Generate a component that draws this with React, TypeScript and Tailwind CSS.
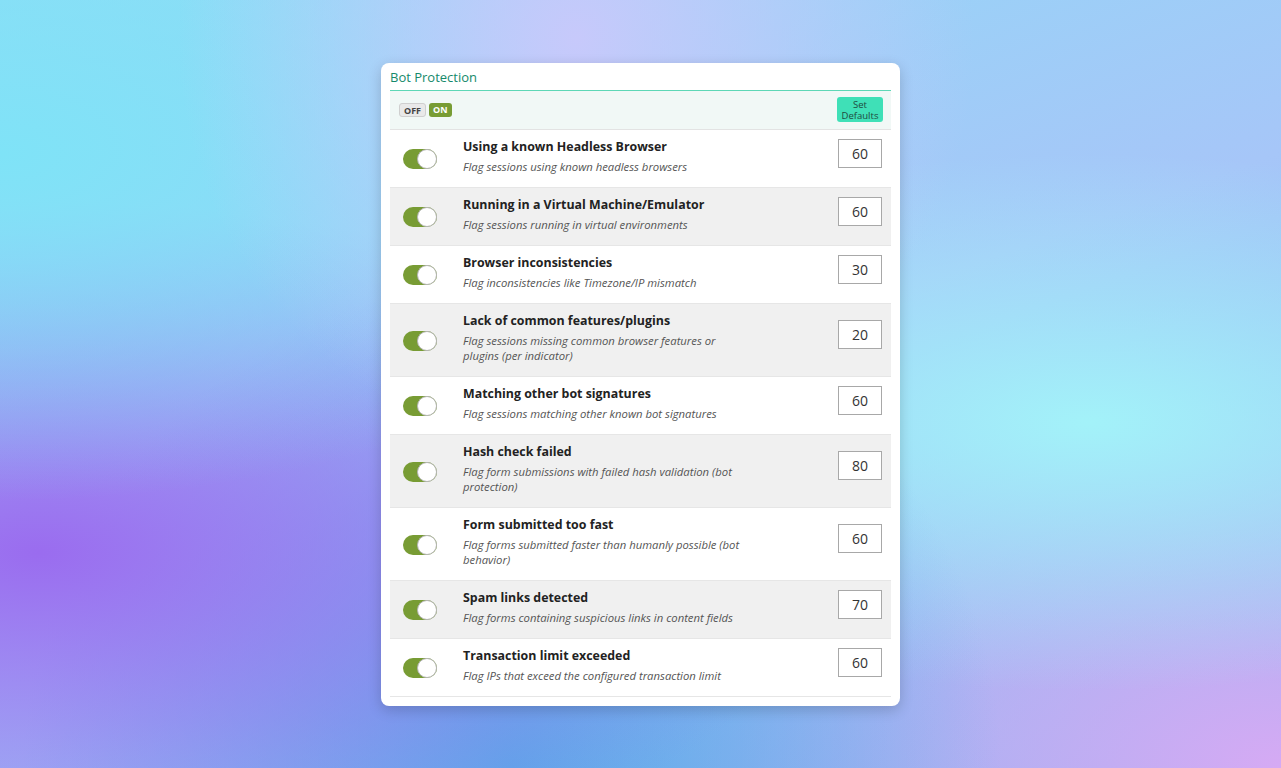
import { useState } from "react";

type Rule = {
  title: string;
  desc: string;
  score: number;
};

const rules: Rule[] = [
  { title: "Using a known Headless Browser", desc: "Flag sessions using known headless browsers", score: 60 },
  { title: "Running in a Virtual Machine/Emulator", desc: "Flag sessions running in virtual environments", score: 60 },
  { title: "Browser inconsistencies", desc: "Flag inconsistencies like Timezone/IP mismatch", score: 30 },
  { title: "Lack of common features/plugins", desc: "Flag sessions missing common browser features or plugins (per indicator)", score: 20 },
  { title: "Matching other bot signatures", desc: "Flag sessions matching other known bot signatures", score: 60 },
  { title: "Hash check failed", desc: "Flag form submissions with failed hash validation (bot protection)", score: 80 },
  { title: "Form submitted too fast", desc: "Flag forms submitted faster than humanly possible (bot behavior)", score: 60 },
  { title: "Spam links detected", desc: "Flag forms containing suspicious links in content fields", score: 70 },
  { title: "Transaction limit exceeded", desc: "Flag IPs that exceed the configured transaction limit", score: 60 },
];

function Toggle({ on }: { on: boolean }) {
  return (
    <div
      className={`w-[34px] h-[20px] rounded-full relative ${on ? "bg-[#789c34]" : "bg-[#cfcfcf]"}`}
    >
      <div
        className={`absolute top-0 w-[20px] h-[20px] rounded-full bg-white border border-[#b5b5b5] ${on ? "right-0" : "left-0"}`}
      ></div>
    </div>
  );
}

export default function App() {
  const [enabled] = useState(true);

  return (
    <div className="min-h-screen w-full flex items-center justify-center font-['Open_Sans',sans-serif] bg-[radial-gradient(ellipse_at_45%_5%,#c7c9fb_0%,transparent_40%),radial-gradient(ellipse_at_0%_20%,#7fe3f7_0%,transparent_40%),radial-gradient(ellipse_at_3%_72%,#9a6cef_0%,transparent_45%),radial-gradient(ellipse_at_40%_100%,#5ca9e9_0%,transparent_45%),radial-gradient(ellipse_at_85%_55%,#a3f2f9_0%,transparent_45%),radial-gradient(ellipse_at_100%_100%,#d6aaf4_0%,transparent_35%),linear-gradient(160deg,#8fdcf6,#a6c6f8_50%,#8ab3ef)]">
      <div className="w-[519px] bg-white rounded-[8px] shadow-[0_4px_14px_rgba(0,0,0,0.18)] px-[9px] pt-[4px] pb-[9px]">
        <div className="h-[21px] leading-[21px] text-[13px] text-[#15896b] mb-[2px]">Bot Protection</div>
        <div className="border-t border-[#5ed7b6]"></div>

        {/* Master switch + defaults */}
        <div className="h-[39px] bg-[#f1f8f6] border-b border-[#e3e3e3] flex items-center justify-between pl-[9px] pr-[8px]">
          <div className="flex items-center gap-[3px]">
            <span className="h-[14px] px-[4px] leading-[14px] text-[9px] font-bold text-[#444] bg-[#e9e9e9] border border-[#cfcfcf] rounded-[3px]">OFF</span>
            <span className="h-[14px] px-[4px] leading-[14px] text-[9px] font-bold text-white bg-[#789c34] rounded-[3px]">ON</span>
          </div>
          <button className="w-[46px] h-[25px] bg-[#3fe0b7] rounded-[3px] text-[9.5px] leading-[11px] text-[#1f4a3f] flex flex-col items-center justify-center">
            <span>Set</span>
            <span>Defaults</span>
          </button>
        </div>

        {rules.map((r, i) => (
          <div
            key={r.title}
            className={`flex items-center border-b border-[#e6e6e6] pt-[7px] pb-[13px] ${i % 2 === 1 ? "bg-[#f0f0f0]" : "bg-white"}`}
          >
            <div className="w-[73px] pl-[13px] pt-[8px] shrink-0">
              <Toggle on={enabled} />
            </div>
            <div className="flex-1">
              <div className="text-[12.4px] leading-[20px] font-bold text-[#222]">{r.title}</div>
              <div className="mt-[2px] w-[285px] text-[11.3px] leading-[15px] italic text-[#555]">{r.desc}</div>
            </div>
            <div className="pr-[9px] pb-[4px] shrink-0">
              <input
                type="text"
                defaultValue={r.score}
                className="w-[44px] h-[29px] border border-[#a8a8a8] bg-white text-center text-[14px] text-[#333] outline-none"
              />
            </div>
          </div>
        ))}
      </div>
    </div>
  );
}
